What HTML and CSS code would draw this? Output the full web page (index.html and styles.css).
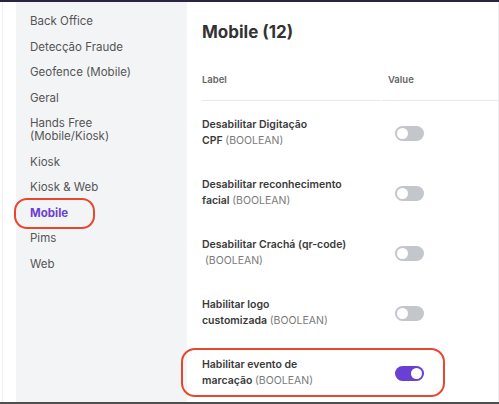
FILE: index.html
```html
<!DOCTYPE html>
<html lang="pt">
<head>
<meta charset="utf-8">
<title>Mobile</title>
<link rel="stylesheet" href="styles.css">
</head>
<body>
<div class="topbar"></div>
<div class="app">
  <div class="gutter"></div>
  <nav class="sidebar">
    <div class="nav-item">Back Office</div>
    <div class="nav-item">Detecção Fraude</div>
    <div class="nav-item">Geofence (Mobile)</div>
    <div class="nav-item">Geral</div>
    <div class="nav-item">Hands Free<br>(Mobile/Kiosk)</div>
    <div class="nav-item">Kiosk</div>
    <div class="nav-item">Kiosk &amp; Web</div>
    <div class="nav-item active">Mobile<span class="annot annot-nav"></span></div>
    <div class="nav-item">Pims</div>
    <div class="nav-item">Web</div>
  </nav>
  <main class="main">
    <h1 class="title">Mobile (12)</h1>
    <div class="table">
      <div class="row head">
        <div class="cell th">Label</div>
        <div class="cell th th-value">Value</div>
      </div>
      <div class="row">
        <div class="cell label">Desabilitar Digitação<br>CPF <span class="type">(BOOLEAN)</span></div>
        <div class="cell value"><span class="toggle"><span class="knob"></span></span></div>
      </div>
      <div class="row">
        <div class="cell label">Desabilitar reconhecimento<br>facial <span class="type">(BOOLEAN)</span></div>
        <div class="cell value"><span class="toggle"><span class="knob"></span></span></div>
      </div>
      <div class="row">
        <div class="cell label">Desabilitar Crachá (qr-code)<br><span class="type">&nbsp;(BOOLEAN)</span></div>
        <div class="cell value"><span class="toggle"><span class="knob"></span></span></div>
      </div>
      <div class="row">
        <div class="cell label">Habilitar logo<br>customizada <span class="type">(BOOLEAN)</span></div>
        <div class="cell value"><span class="toggle"><span class="knob"></span></span></div>
      </div>
      <div class="row highlighted">
        <div class="cell label">Habilitar evento de<br>marcação <span class="type">(BOOLEAN)</span></div>
        <div class="cell value"><span class="toggle on"><span class="knob"></span></span></div>
        <span class="annot annot-row"></span>
      </div>
    </div>
  </main>
</div>
<div class="bottombar"></div>
</body>
</html>
```

FILE: styles.css
```css
* { box-sizing: border-box; }
html, body { margin: 0; padding: 0; }
body {
  width: 499px;
  height: 404px;
  overflow: hidden;
  display: flex;
  flex-direction: column;
  background: #ffffff;
  font-family: Inter, "Noto Sans", "Liberation Sans", sans-serif;
  color: #333;
}
.topbar { height: 2px; background: #2b2340; flex: none; }
.bottombar { height: 2px; background: #4e4e4e; flex: none; }
.app {
  flex: 1;
  display: flex;
  overflow: hidden;
  border-right: 1px solid #ececef;
}
.gutter {
  width: 16px;
  flex: none;
  background: #fff;
  border-left: 2px solid #fff;
  box-shadow: inset 1px 0 0 #eef0f2;
}
.sidebar {
  width: 171px;
  flex: none;
  background: #f3f4f6;
  padding-top: 7px;
}
.nav-item {
  position: relative;
  padding: 6px 0 6.5px 14px;
  font-size: 11.5px;
  line-height: 13px;
  color: #555;
}
.nav-item.active { color: #6b3fd2; font-weight: 700; }
.annot {
  position: absolute;
  border: 2px solid #e8472f;
  border-radius: 13px;
  pointer-events: none;
}
.annot-nav { left: -2px; top: -3px; width: 81px; height: 31px; }
.main {
  flex: 1;
  padding: 20px 0 0 15px;
  min-width: 0;
}
.title {
  margin: 0 0 20px 0;
  font-size: 17px;
  line-height: 20px;
  font-weight: 700;
  color: #333;
}
.row {
  position: relative;
  display: grid;
  grid-template-columns: 178px 1fr;
  column-gap: 2px;
  align-items: center;
  padding: 16px 0 12px;
}
.row.head { padding: 0; align-items: stretch; }
.th {
  padding: 12px 0 14px;
  font-size: 9.5px;
  line-height: 12px;
  font-weight: 600;
  color: #666;
  border-bottom: 1px solid #e7e8ea;
}
.th-value { padding-left: 6px; }
.label {
  font-size: 10.5px;
  line-height: 16px;
  font-weight: 600;
  color: #3a3a3a;
  white-space: nowrap;
}
.type { font-weight: 400; color: #7a7a7a; }
.value { padding-left: 13px; display: flex; align-items: center; }
.toggle {
  display: inline-flex;
  align-items: center;
  width: 29px;
  height: 15px;
  border-radius: 8px;
  background: #c3c6ca;
  padding: 0 2px;
}
.knob {
  width: 11px;
  height: 11px;
  border-radius: 50%;
  background: #fff;
}
.toggle.on { background: #6a3fd3; justify-content: flex-end; }
.annot-row { left: -21px; top: 7px; width: 264px; height: 49px; border-radius: 14px; }
```
